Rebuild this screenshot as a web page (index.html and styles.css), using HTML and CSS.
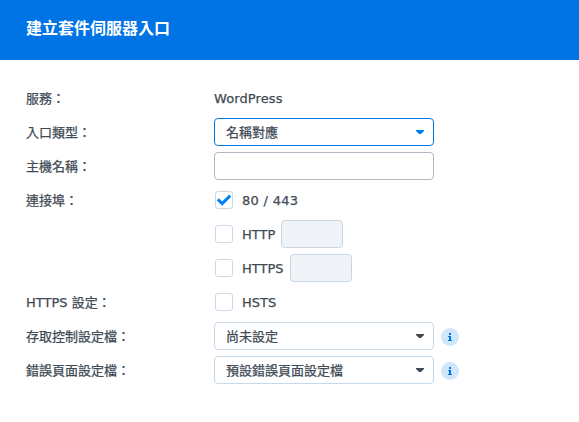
FILE: index.html
```html
<!DOCTYPE html>
<html lang="zh-Hant">
<head>
<meta charset="utf-8">
<title>建立套件伺服器入口</title>
<link rel="stylesheet" href="styles.css">
</head>
<body>
<header class="header"><h1 class="title">建立套件伺服器入口</h1></header>
<main class="form">
  <div class="row"><span class="label">服務：</span><span class="text value">WordPress</span></div>
  <div class="row"><span class="label">入口類型：</span>
    <div class="select active"><span class="text">名稱對應</span><svg class="arrow" viewBox="0 0 8 4"><path d="M0 0h8v1L5 4H3L0 1z"/></svg></div></div>
  <div class="row"><span class="label">主機名稱：</span><input class="field" type="text" aria-label="主機名稱"></div>
  <div class="row"><span class="label">連接埠：</span>
    <span class="box"><svg class="check" viewBox="0 0 16 16"><path d="M1.8 7.4L6.2 11.6L14.2 3.6"/></svg></span><span class="text ports">80 / 443</span></div>
  <div class="row"><span class="label"></span><span class="box"></span><span class="text">HTTP</span><span class="port"></span></div>
  <div class="row"><span class="label"></span><span class="box"></span><span class="text">HTTPS</span><span class="port"></span></div>
  <div class="row"><span class="label">HTTPS 設定：</span><span class="box"></span><span class="text">HSTS</span></div>
  <div class="row"><span class="label">存取控制設定檔：</span>
    <div class="select"><span class="text">尚未設定</span><svg class="arrow" viewBox="0 0 8 4"><path d="M0 0h8v1L5 4H3L0 1z"/></svg></div>
    <svg class="info" viewBox="0 0 18 18"><circle cx="9" cy="9" r="9"/><path d="M8 5h2v2H8zM7 8h3v4h1v1H7v-1h1V9H7z"/></svg></div>
  <div class="row"><span class="label">錯誤頁面設定檔：</span>
    <div class="select"><span class="text">預設錯誤頁面設定檔</span><svg class="arrow" viewBox="0 0 8 4"><path d="M0 0h8v1L5 4H3L0 1z"/></svg></div>
    <svg class="info" viewBox="0 0 18 18"><circle cx="9" cy="9" r="9"/><path d="M8 5h2v2H8zM7 8h3v4h1v1H7v-1h1V9H7z"/></svg></div>
</main>
</body>
</html>
```
FILE: styles.css
```css
* { box-sizing: border-box; }
body {
  margin: 0;
  background: #fff;
  color: #414b55;
  font: 13px/24px "DejaVu Sans", "Noto Sans CJK TC", sans-serif;
}
.header {
  height: 60px;
  padding: 0 26px;
  display: flex;
  align-items: center;
  background: #0074e4;
  color: #fff;
}
.title { margin: 0 0 2px; font-size: 16px; font-weight: 700; }
.form {
  padding: 24px 26px;
  display: flex;
  flex-direction: column;
  gap: 6px;
}
.row { height: 28px; display: flex; align-items: center; white-space: nowrap; }
.label, .text { padding-top: 2px; -webkit-text-stroke: 0.25px #414b55; }
.label { width: 188px; flex: none; }
.value { letter-spacing: 0.1px; }
.ports { letter-spacing: 0.3px; }
.select, .field {
  width: 220px;
  height: 28px;
  border: 1px solid #c8d8e6;
  border-radius: 4px;
  background: #fff;
}
.select {
  padding: 0 9px 0 11px;
  display: flex;
  align-items: center;
  justify-content: space-between;
}
.field { border-color: #b0b8c4; padding: 0 11px; font: inherit; outline: none; }
.active { border-color: #0078e6; }
.arrow { width: 8px; height: 4px; fill: #414b55; }
.active .arrow { fill: #0080ee; }
.box {
  width: 18px;
  height: 18px;
  margin: 0 9px 0 1px;
  border: 1px solid #c8d8e6;
  border-radius: 3px;
  flex: none;
}
.check { display: block; width: 16px; height: 16px; fill: none; stroke: #0080f4; stroke-width: 2.9; }
.port {
  width: 62px;
  height: 28px;
  margin-left: 6px;
  border: 1px solid #c8d4e0;
  border-radius: 4px;
  background: #f0f4f8;
}
.info { width: 18px; height: 18px; margin: 2px 0 0 7px; fill: #0073df; }
.info circle { fill: #cfe6fb; }
```
